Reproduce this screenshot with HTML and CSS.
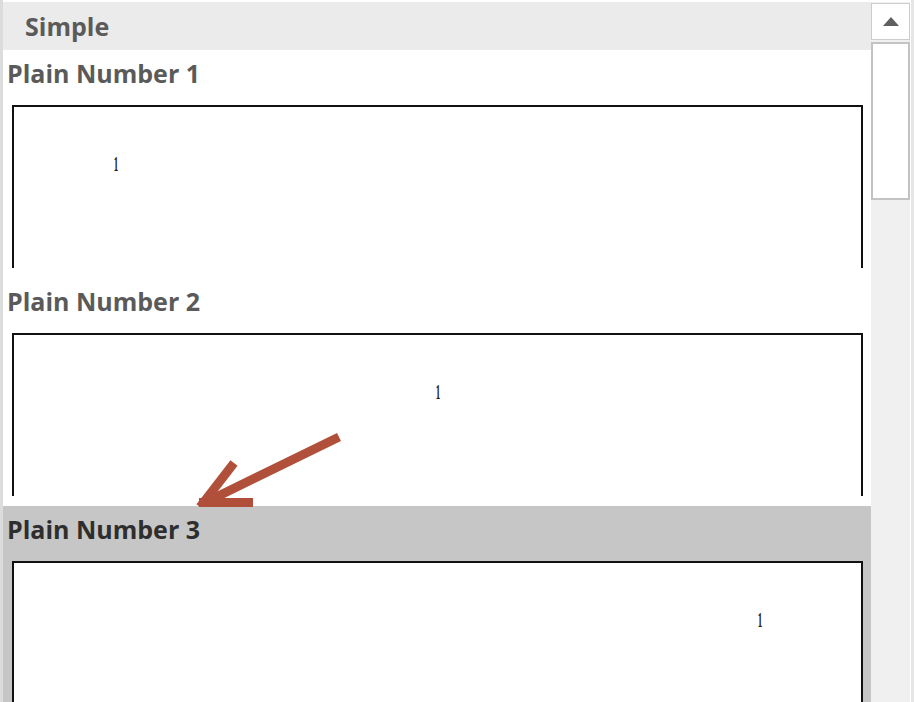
FILE: index.html
```html
<!DOCTYPE html>
<html>
<head>
<meta charset="utf-8">
<link rel="stylesheet" href="styles.css">
</head>
<body>
<div class="window">
  <div class="list">
    <div class="group-header">Simple</div>
    <div class="item">
      <div class="item-label">Plain Number 1</div>
      <div class="preview">
        <div class="page page-left"><span class="num">1</span></div>
      </div>
    </div>
    <div class="item">
      <div class="item-label">Plain Number 2</div>
      <div class="preview">
        <div class="page page-center"><span class="num">1</span></div>
      </div>
    </div>
    <div class="item item-selected">
      <div class="item-label">Plain Number 3</div>
      <div class="preview">
        <div class="page page-right"><span class="num">1</span></div>
      </div>
    </div>
  </div>
  <div class="scrollbar">
    <div class="scroll-up">
      <svg class="scroll-arrow" width="16" height="9" viewBox="0 0 16 9"><polygon points="8,0 16,9 0,9" fill="#606060"/></svg>
    </div>
    <div class="scroll-thumb"></div>
  </div>
  <svg class="callout" width="914" height="507" viewBox="0 0 914 507">
    <g stroke="#b0503a" stroke-width="9" stroke-linecap="butt" fill="none">
      <line x1="339" y1="437" x2="204" y2="503"/>
      <line x1="234" y1="463" x2="200" y2="507"/>
      <line x1="253" y1="502.5" x2="199" y2="502.5"/>
    </g>
  </svg>
</div>
</body>
</html>
```

FILE: styles.css
```css
html, body {
  margin: 0;
  padding: 0;
  background: #ffffff;
}

.window {
  position: relative;
  display: flex;
  width: 914px;
  height: 702px;
  box-sizing: border-box;
  padding-top: 2px;
  border-left: 3px solid #dcdcdc;
  border-right: 3px solid #e6e6e6;
  overflow: hidden;
  font-family: "Open Sans", "Noto Sans", sans-serif;
  font-weight: 700;
}

.list {
  flex: 0 0 868px;
  display: flex;
  flex-direction: column;
  overflow: hidden;
}

.group-header {
  flex: 0 0 48px;
  box-sizing: border-box;
  background: #ebebeb;
  color: #5a5a5a;
  font-size: 25px;
  line-height: 48px;
  padding-left: 22px;
}

.item {
  flex: 0 0 228px;
  display: flex;
  flex-direction: column;
  background: #ffffff;
}

.item-label {
  flex: 0 0 55px;
  box-sizing: border-box;
  padding: 8px 0 0 4px;
  color: #5a5a5a;
  font-size: 25px;
  line-height: 30px;
}

.item-selected {
  background: #c6c6c6;
}

.item-selected .item-label {
  color: #2e2e2e;
}

.preview {
  height: 163px;
  margin: 0 8px 0 9px;
  overflow: hidden;
}

.page {
  box-sizing: border-box;
  height: 240px;
  background: #ffffff;
  border: 2px solid #111111;
  display: flex;
  padding-top: 46px;
}

.page-left { justify-content: flex-start; padding-left: 97px; }
.page-center { justify-content: center; }
.page-right { justify-content: flex-end; padding-right: 96px; }

.num {
  font-family: "Liberation Serif", serif;
  font-weight: 700;
  font-size: 20px;
  line-height: 22px;
  color: #222222;
  display: inline-block;
  transform: scaleX(0.45);
}

.scrollbar {
  flex: 0 0 39px;
  display: flex;
  flex-direction: column;
  background: #f0f0f0;
  padding-top: 1px;
}

.scroll-up {
  height: 37px;
  box-sizing: border-box;
  border: 1px solid #cccccc;
  background: #ffffff;
  display: flex;
  align-items: center;
  justify-content: center;
}

.scroll-thumb {
  margin-top: 2px;
  height: 158px;
  box-sizing: border-box;
  border: 2px solid #c3c3c3;
  background: #ffffff;
}

.callout {
  position: absolute;
  left: -3px;
  top: 0;
  pointer-events: none;
}
```
